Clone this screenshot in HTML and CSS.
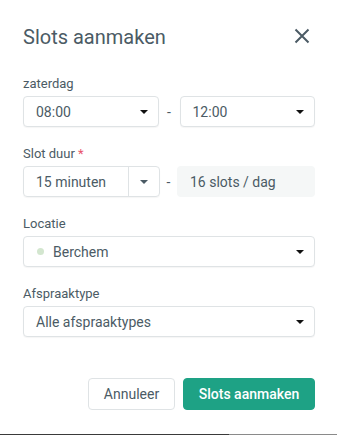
FILE: index.html
```html
<!DOCTYPE html>
<html>
<head>
<meta charset="utf-8">
<link rel="stylesheet" href="styles.css">
</head>
<body>
<div class="dialog">
  <div class="header">
    <h1 class="title">Slots aanmaken</h1>
    <svg class="close" width="16" height="16" viewBox="0 0 16 16"><path d="M1.5 1.5L14.5 14.5M14.5 1.5L1.5 14.5" stroke="#4b5b65" stroke-width="2" fill="none"/></svg>
  </div>

  <div class="field first">
    <div class="label">zaterdag</div>
    <div class="row">
      <div class="select grow"><span>08:00</span><span class="caret"></span></div>
      <span class="dash">-</span>
      <div class="select grow"><span>12:00</span><span class="caret"></span></div>
    </div>
  </div>

  <div class="field">
    <div class="label">Slot duur <span class="req">*</span></div>
    <div class="row">
      <div class="split">
        <span class="split-main">15 minuten</span>
        <span class="split-btn"><span class="caret grey"></span></span>
      </div>
      <span class="dash narrow">-</span>
      <div class="info">16 slots / dag</div>
    </div>
  </div>

  <div class="field">
    <div class="label">Locatie</div>
    <div class="select"><span class="loc"><span class="dot"></span>Berchem</span><span class="caret"></span></div>
  </div>

  <div class="field">
    <div class="label">Afspraaktype</div>
    <div class="select"><span>Alle afspraaktypes</span><span class="caret"></span></div>
  </div>

  <div class="actions">
    <button class="btn btn-default">Annuleer</button>
    <button class="btn btn-primary">Slots aanmaken</button>
  </div>
</div>
<div class="bottom-edge"><span class="edge-dark"></span><span class="edge-grey"></span></div>
</body>
</html>
```
FILE: styles.css
```css
html, body {
  margin: 0;
  padding: 0;
  background: #fff;
}
body {
  font-family: Roboto, "Liberation Sans", sans-serif;
  color: #4b5b65;
  width: 337px;
  height: 435px;
  position: relative;
  overflow: hidden;
}
.dialog {
  padding: 0 22px 0 23px;
}
.header {
  display: flex;
  align-items: center;
  justify-content: space-between;
  padding-top: 25px;
  height: 24px;
}
.title {
  margin: 0;
  font-size: 20px;
  font-weight: 400;
  line-height: 24px;
  color: #4b5b65;
}
.close {
  margin-right: 5px;
  margin-top: -2px;
}
.field {
  margin-top: 19px;
}
.field.first {
  margin-top: 27px;
}
.label {
  font-size: 13px;
  line-height: 16px;
  margin-bottom: 4px;
  color: #4b5b65;
}
.req {
  color: #e8546b;
}
.row {
  display: flex;
  align-items: center;
}
.dash {
  width: 21px;
  text-align: center;
  font-size: 14px;
  color: #4b5b65;
}
.dash.narrow {
  width: 17px;
}
.select {
  box-sizing: border-box;
  height: 31px;
  border: 1px solid #dfe3e5;
  border-radius: 4px;
  box-shadow: 0 1px 1px rgba(0,0,0,0.04);
  display: flex;
  align-items: center;
  justify-content: space-between;
  padding: 0 10px 0 12px;
  font-size: 14px;
  color: #4b5b65;
  background: #fff;
}
.grow {
  flex: 1;
}
.caret {
  width: 0;
  height: 0;
  border-left: 4px solid transparent;
  border-right: 4px solid transparent;
  border-top: 4px solid #111;
}
.caret.grey {
  border-top-color: #4b5b65;
}
.split {
  box-sizing: border-box;
  width: 137px;
  height: 31px;
  border: 1px solid #dfe3e5;
  border-radius: 4px;
  box-shadow: 0 1px 1px rgba(0,0,0,0.04);
  display: flex;
  align-items: stretch;
  font-size: 14px;
}
.split-main {
  flex: 1;
  display: flex;
  align-items: center;
  padding-left: 12px;
  border-right: 1px solid #dfe3e5;
}
.split-btn {
  width: 30px;
  display: flex;
  align-items: center;
  justify-content: center;
}
.info {
  flex: 1;
  box-sizing: border-box;
  height: 31px;
  background: #f5f7f7;
  border-radius: 4px;
  display: flex;
  align-items: center;
  padding-left: 13px;
  font-size: 14px;
  color: #4b5b65;
}
.loc {
  display: flex;
  align-items: center;
}
.dot {
  width: 7px;
  height: 7px;
  border-radius: 50%;
  background: #d3e6cf;
  margin-right: 9px;
  margin-left: 1px;
}
.actions {
  display: flex;
  justify-content: flex-end;
  gap: 8px;
  margin-top: 41px;
}
.btn {
  box-sizing: border-box;
  height: 32px;
  border-radius: 4px;
  font-family: Roboto, "Liberation Sans", sans-serif;
  font-size: 14px;
  padding: 0;
  white-space: nowrap;
  cursor: pointer;
}
.btn-default {
  background: #fff;
  border: 1px solid #dfe3e5;
  color: #4b5b65;
  width: 87px;
}
.btn-primary {
  background: #1ea285;
  border: 1px solid #1ea285;
  color: #fff;
  font-weight: 500;
  width: 132px;
}
.bottom-edge {
  position: absolute;
  left: 0;
  right: 0;
  bottom: 0;
  height: 1px;
  display: flex;
}
.edge-dark {
  width: 229px;
  background: #3a3a3a;
}
.edge-grey {
  flex: 1;
  background: #8a8a8a;
}
```
